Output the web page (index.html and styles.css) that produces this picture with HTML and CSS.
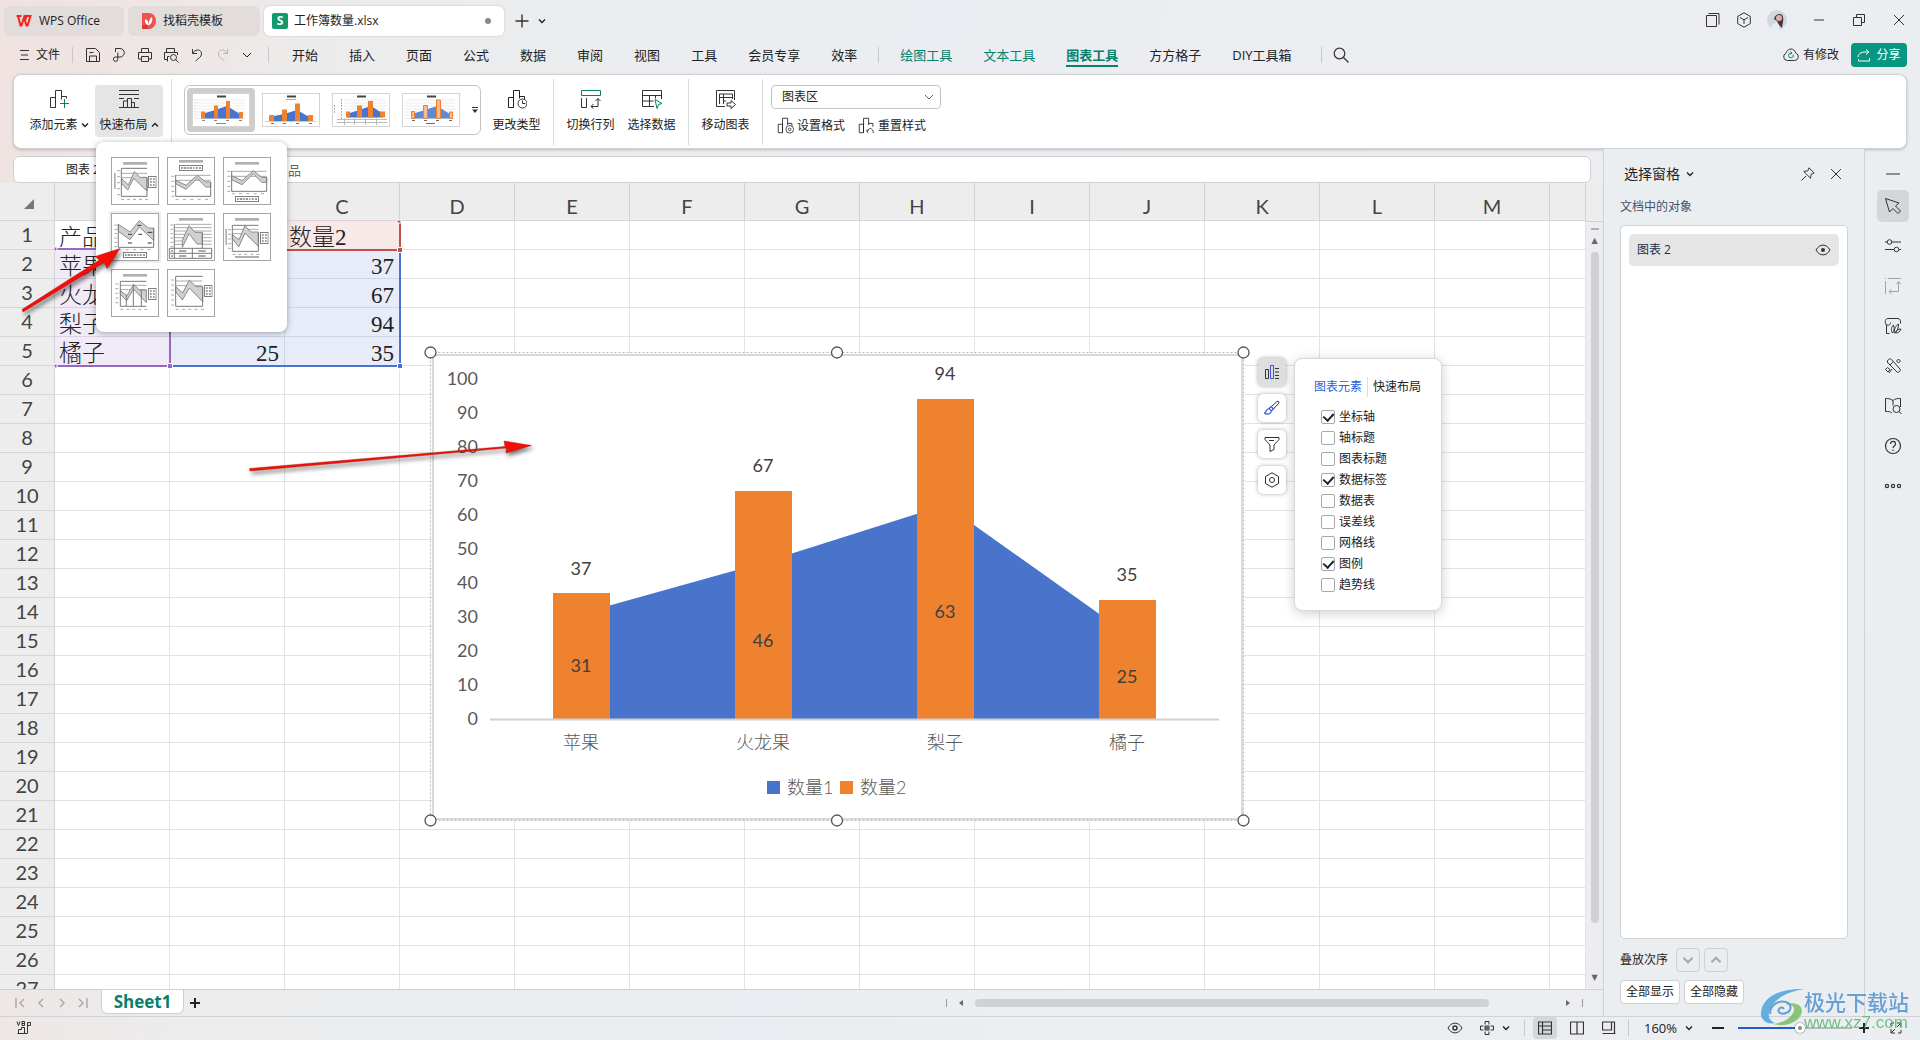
FILE: index.html
```html
<!DOCTYPE html>
<html lang="zh-CN">
<head>
<meta charset="utf-8">
<title>工作簿数量.xlsx - WPS Office</title>
<link rel="stylesheet" href="styles.css">
</head>
<body>
<svg class="defs" width="0" height="0" aria-hidden="true">
  <symbol id="down" viewBox="0 0 8 8"><path d="M1 2.500l3 3 3-3" fill="none" stroke="currentColor" stroke-width="1.400"/></symbol>
  <symbol id="up" viewBox="0 0 8 8"><path d="M1 5.500l3-3 3 3" fill="none" stroke="currentColor" stroke-width="1.400"/></symbol>
  <symbol id="down-thin" viewBox="0 0 12 12"><path d="M2 4l4 4 4-4" fill="none" stroke="currentColor"/></symbol>
  <symbol id="bars" viewBox="0 0 20 20"><path d="M1.500 18.500v-10h5v10zM6.500 18.500v-17h6v8M12.500 7.500h5v4" fill="none" stroke="currentColor"/></symbol>
  <symbol id="legend-box" viewBox="0 0 26 36"><rect x="1.500" y="1.500" width="23" height="33" fill="#fff" stroke="#7f7f7f" stroke-width="3"/><path d="M6 9h5M6 18h5M6 27h5M15 9h5M15 18h5M15 27h5" stroke="#777" stroke-width="4"/></symbol>
  <symbol id="legend-row" viewBox="0 0 72 18"><rect x="1.500" y="1.500" width="69" height="15" fill="#fff" stroke="#7f7f7f" stroke-width="3"/><path d="M6 9h5M14 9h8M24 9h5M32 9h7M42 9h4M50 9h6M60 9h6" stroke="#777" stroke-width="4"/></symbol>
</svg>

<header class="titlebar">
  <nav class="doc-tabs">
    <button class="doc-tab tab-home"><svg width="16" height="14" viewBox="0 0 16 14"><path d="M.5 2h5M2 2l2.500 9.500h1L8 3.500l2.500 8h1L14.500 2H8.500M10.500 2L9 7" fill="none" stroke="#f4251f" stroke-width="2"/></svg>WPS Office</button>
    <button class="doc-tab tab-tpl"><svg width="14" height="16" viewBox="0 0 14 16"><path d="M0 0h7a7 8 0 0 1 0 16H0z" fill="#ef5350"/><path d="M0 12h6v4H0z" fill="#d43c3c"/><path d="M6.500 12.500C3 11 2.500 8 3.500 6c2 1 3 3 3 6.500 0-4 1-6.500 3.500-8.500 1 4-.5 7-3.500 8.500z" fill="#fff"/></svg>找稻壳模板</button>
    <button class="doc-tab tab-doc"><span class="s-icon">S</span>工作簿数量.xlsx<span class="dot"></span></button>
    <button class="plain new-tab" aria-label="新建"><svg width="14" height="14" viewBox="0 0 14 14"><path d="M7 .5v13M.5 7h13" stroke="#333" stroke-width="1.400"/></svg></button>
    <button class="plain" aria-label="标签列表"><svg width="8" height="8"><use href="#down"/></svg></button>
  </nav>
  <div class="win-tools">
    <button class="plain" aria-label="窗口"><svg width="16" height="16" viewBox="0 0 16 16"><path d="M1.500 3.500h10v11h-10zM3.500 1.500h10.500v11" fill="none" stroke="#333"/></svg></button>
    <button class="plain" aria-label="应用"><svg width="16" height="16" viewBox="0 0 16 16"><path d="M8 .8l6.300 3.600v7.200L8 15.200l-6.300-3.600V4.400zM4 5.500l4 2.300 4-2.300M8 7.800v4.200" fill="none" stroke="#333"/></svg></button>
    <button class="plain" aria-label="账号"><svg width="20" height="20" viewBox="0 0 20 20"><circle cx="10" cy="10" r="10" fill="#cfd9df"/><path d="M7 9c1-5 8-7 9-2 .8 4-.5 6-1 11l-3-3-2-4z" fill="#4a3440"/><circle cx="12" cy="8" r="3" fill="#dcb0a5"/><path d="M4 16l5-4 3 3v5H6z" fill="#e7eef2"/></svg></button>
    <button class="plain wide" aria-label="最小化"><svg width="16" height="16" viewBox="0 0 16 16"><path d="M3 8h10" stroke="#333"/></svg></button>
    <button class="plain wide" aria-label="还原"><svg width="16" height="16" viewBox="0 0 16 16"><path d="M2.500 5.500h8v8h-8zM5.500 5V2.500h8v8H11" fill="none" stroke="#333"/></svg></button>
    <button class="plain wide" aria-label="关闭"><svg width="16" height="16" viewBox="0 0 16 16"><path d="M3 3l10 10M13 3L3 13" stroke="#333"/></svg></button>
  </div>
</header>

<div class="menubar">
  <button class="plain file"><svg width="10" height="12" viewBox="0 0 10 12"><path d="M0 1.500h9M1 6h7M0 10.500h9" stroke="#333"/></svg>文件</button>
  <i class="vsep"></i>
  <div class="quick">
    <button class="plain" aria-label="保存"><svg width="16" height="16" viewBox="0 0 16 16"><path d="M1.500 14.500v-13h9l4 4v9zM4.500 14v-5h7v5M4.500 5.500h4" fill="none" stroke="#333"/></svg></button>
    <button class="plain" aria-label="输出"><svg width="16" height="16" viewBox="0 0 16 16"><path d="M4.500 5V1.500H9a4 4 0 0 1 0 8.500H4.500a2.200 2.200 0 1 0 2.300 2.200V5.500" fill="none" stroke="#333"/></svg></button>
    <button class="plain" aria-label="打印"><svg width="16" height="16" viewBox="0 0 16 16"><path d="M4.500 5V1.500h7V5M4.500 12h-3V5.500h13V12h-3M4.500 9.500h7v5h-7z" fill="none" stroke="#333"/></svg></button>
    <button class="plain" aria-label="打印预览"><svg width="16" height="16" viewBox="0 0 16 16"><path d="M3.500 5V1.500h8V5M4 12.500H1.500v-7h13V8M4.500 14.500v-5h2" fill="none" stroke="#333"/><circle cx="10.500" cy="10.500" r="3" fill="none" stroke="#333"/><path d="M12.500 12.500l3 3" stroke="#333"/></svg></button>
    <button class="plain" aria-label="撤销"><svg width="16" height="16" viewBox="0 0 16 16"><path d="M3.500 2v4.500H8M4 6c3-5 9-3 8.500 1 0 3-3 4-6 7" fill="none" stroke="#333"/></svg></button>
    <button class="plain" aria-label="恢复"><svg width="16" height="16" viewBox="0 0 16 16"><path d="M12.500 2v4.500H8M12 6C9 1 3 3 3.500 7c0 3 3 4 6 7" fill="none" stroke="#b5b5b5"/></svg></button>
    <button class="plain" aria-label="更多"><svg width="12" height="12"><use href="#down-thin"/></svg></button>
  </div>
  <i class="vsep"></i>
  <nav class="menu-tabs">
    <a href="#">开始</a><a href="#">插入</a><a href="#">页面</a><a href="#">公式</a><a href="#">数据</a><a href="#">审阅</a><a href="#">视图</a><a href="#">工具</a><a href="#">会员专享</a><a href="#">效率</a>
    <i class="vsep"></i>
    <a class="ctx" href="#">绘图工具</a><a class="ctx" href="#">文本工具</a><a class="ctx active" href="#">图表工具</a><a href="#">方方格子</a><a href="#">DIY工具箱</a>
    <i class="vsep"></i>
    <button class="plain" aria-label="搜索"><svg width="16" height="16" viewBox="0 0 16 16"><circle cx="6.500" cy="6.500" r="5.300" fill="none" stroke="#333" stroke-width="1.200"/><path d="M10.500 10.500l5 5" stroke="#333" stroke-width="1.200"/></svg></button>
  </nav>
  <div class="menu-right">
    <button class="plain changed"><svg width="16" height="14" viewBox="0 0 16 14"><path d="M4.500 12.500A3.800 3.800 0 0 1 3 5.200C4 2.500 6 1 8 1s4 1.500 5 4.200a3.800 3.800 0 0 1-1.500 7.300z" fill="none" stroke="#333"/><path d="M10.200 6.500a2.400 2.400 0 1 1-2-1.500M7.500 3.500L9 5 7.500 6.500" fill="none" stroke="#0a8a6a"/></svg>有修改</button>
    <button class="share"><svg width="14" height="14" viewBox="0 0 14 14"><path d="M1 9c.5-4 4-5.500 10.500-5M9 1.500l3 2.500-3 2.500M1.500 11v2h11v-3" fill="none" stroke="#fff"/></svg>分享</button>
  </div>
</div>

<section class="ribbon">
  <button class="rb add"><svg class="ri" width="20" height="20" viewBox="0 0 20 20"><path d="M1.500 18.500v-10h5v10zM6.500 18.500v-17h6v9M12.500 7.500h5v2" fill="none" stroke="#333"/><path d="M15.500 10v9M11 14.500h9" stroke="#08805f"/></svg><span>添加元素<svg width="8" height="8"><use href="#down"/></svg></span></button>
  <button class="rb quick-layout"><svg class="ri" width="20" height="20" viewBox="0 0 20 20"><path d="M0 1.500h20M0 5.500h20M0 9.500h5M15 9.500h5M0 18.500h20M4.500 18v-6h4v6M8.500 18V9.500h4V18M12.500 13.500h3V18" fill="none" stroke="#333"/></svg><span>快速布局<svg width="8" height="8"><use href="#up"/></svg></span></button>
  <i class="rsep"></i>
  <div class="gallery">
    <button class="thumb selected" aria-label="样式 1"><svg width="56" height="32" viewBox="0 0 56 32"><path d="M2 6h50M2 9h50M2 12h50M2 15h50M2 18h50M2 21h50M2 24.500h50" stroke="#ececec"/><path d="M24 2.500h9" stroke="#444" stroke-width="2"/><path d="M2 5v20" stroke="#bcd" stroke-dasharray="1 2"/><path d="M9 20l13-4 12-4 13 8v4.500H9z" fill="#4874cb"/><path d="M8 17.500h4v7H8zM21 11.500h4v13h-4zM33 7h4v17.500h-4zM46 18h4v6.500h-4z" fill="#ee822f"/><path d="M9 26.500h3M21 26.500h3M33 26.500h3M46 26.500h3M23 29.500h10" stroke="#888"/></svg></button>
    <button class="thumb" aria-label="样式 2"><svg width="56" height="32" viewBox="0 0 56 32"><path d="M24 2.500h9" stroke="#444" stroke-width="2"/><path d="M23 5.500h10" stroke="#aaa"/><path d="M6 23l15-3 13-4 14 8v3H6z" fill="#4874cb"/><path d="M6 21h5v6H6zM19 15.500h5V27h-5zM32 9.500h5V27h-5zM45 21h5v6h-5z" fill="#ee822f"/><path d="M2 27.500h51" stroke="#ccc"/><path d="M8 29.500h3M20 29.500h3M33 29.500h3M46 29.500h3" stroke="#777"/></svg></button>
    <button class="thumb" aria-label="样式 3"><svg width="56" height="32" viewBox="0 0 56 32"><path d="M11 6h42M11 9h42M11 12h42M11 15h42M11 18h42M11 21h42" stroke="#ececec"/><path d="M24 2.500h9" stroke="#444" stroke-width="2"/><path d="M1.500 11v8M8.500 5v20" stroke="#aaa" stroke-dasharray="2 1"/><path d="M14 20l12-4 12-4 11 7v4.500H14z" fill="#4874cb"/><path d="M13 17.500h4v6h-4zM24 11.500h5v12h-5zM35 7h5v16.500h-5zM47 17.500h5v6h-5z" fill="#ee822f"/><path d="M4 25.500h50M4 28.500h50M11.500 24v7M21.500 24v7M32.500 24v7M43.500 24v7" stroke="#bbb"/></svg></button>
    <button class="thumb" aria-label="样式 4"><svg width="56" height="32" viewBox="0 0 56 32"><path d="M2 6h50M2 9h50M2 12h50M2 15h50M2 18h50M2 21h50M2 24.500h50" stroke="#ececec"/><path d="M24 2.500h9" stroke="#444" stroke-width="2"/><path d="M9 20l13-4 12-4 13 8v4.500H9z" fill="#6389d3"/><path d="M8.500 17.500h3v7h-3zM20.500 11.500h4v13h-4zM33.500 6h4v18.500h-4zM46.500 18h3v6.500h-3z" fill="#f6bb8f" stroke="#ee822f"/><path d="M9 26.500h3M21 26.500h3M33 26.500h3M46 26.500h3M23 29.500h9" stroke="#668"/></svg></button>
    <button class="plain more" aria-label="展开"><svg width="8" height="8" viewBox="0 0 8 8"><path d="M1 1.500h6" stroke="#333"/><path d="M1 3.500h6L4 7z" fill="#333"/></svg></button>
  </div>
  <button class="rb change"><svg class="ri" width="20" height="20" viewBox="0 0 20 20"><use href="#bars"/><circle cx="15.500" cy="14.500" r="4.500" fill="#fff" stroke="#333"/><path d="M15.500 11.500v3h3" fill="none" stroke="#333"/></svg><span>更改类型</span></button>
  <i class="rsep"></i>
  <button class="rb switch"><svg class="ri" width="20" height="20" viewBox="0 0 20 20"><path d="M.5 1.500h19v5H.5z" fill="none" stroke="#08805f"/><path d="M.5 9v9.500h5V9M17 9.500v8h-7M14.500 12L17 9.500l2.500 2.500M12.500 15L10 17.500l2.500 2" fill="none" stroke="#333"/></svg><span>切换行列</span></button>
  <button class="rb pick"><svg class="ri" width="20" height="20" viewBox="0 0 20 20"><path d="M12 17.500H.5v-16h19V10M.5 6.500h19M.5 12h11M7.500 6.500v11M13.500 6.500v3" fill="none" stroke="#333"/><path d="M13 10.500l7 4-3.500 1-1.500 4z" fill="#fff" stroke="#08805f"/></svg><span>选择数据</span></button>
  <i class="rsep"></i>
  <button class="rb move"><svg class="ri" width="20" height="20" viewBox="0 0 20 20"><path d="M9 17.500H.5v-16h18V11M3.500 15V5h13v5M3.500 8.500h13M7.500 5v10M7.500 12H10" fill="none" stroke="#333"/><path d="M11 14h4v-2.500l4.500 4-4.500 4V17h-4z" fill="#fff" stroke="#333"/></svg><span>移动图表</span></button>
  <i class="rsep"></i>
  <div class="area-box">
    <div class="combo"><select aria-label="图表区域"><option>图表区</option></select><svg width="12" height="12"><use href="#down-thin"/></svg></div>
    <div class="area-row">
      <button class="plain"><svg width="17" height="17" viewBox="0 0 20 20"><use href="#bars"/><circle cx="15" cy="14.500" r="4.500" fill="#fff" stroke="#333"/><circle cx="15" cy="14.500" r="1.500" fill="none" stroke="#333"/></svg>设置格式</button>
      <button class="plain"><svg width="17" height="17" viewBox="0 0 20 20"><use href="#bars"/><path d="M11 12h8v7h-8z" fill="#fff"/><path d="M12 19l-2-3 3-1M11 17c1-5 7-5 7 2" fill="none" stroke="#333"/></svg>重置样式</button>
    </div>
  </div>
</section>

<div class="main">
  <main class="book">
    <div class="formula"><input class="name-box" aria-label="名称框" value="图表 2"><input class="fx" aria-label="编辑栏" value="品"></div>
    <div class="sheet">
      <table class="cells">
        <thead><tr id="heads"><th class="corner"><svg width="10" height="10" viewBox="0 0 10 10"><path d="M10 0v10H0z" fill="#777"/></svg></th></tr></thead>
        <tbody id="rows"></tbody>
      </table>
      <div class="vscroll"><i class="split"></i><i class="tri">▲</i><i class="thumb-v"></i><i class="tri">▼</i></div>

      <svg class="ranges" width="350" height="156" viewBox="0 0 350 156" aria-hidden="true">
        <path d="M346 5v28H232" fill="none" stroke="#c0504d" stroke-width="2"/>
        <path d="M2 32h114v116M2 149h114" fill="none" stroke="#9668c0" stroke-width="2"/>
        <path d="M119 149h227V34" fill="none" stroke="#4a72d0" stroke-width="2"/>
        <path d="M343 3h4v3h-4zM343.500 30.500h5v5h-5z" fill="#c0504d" stroke="#fff"/>
        <path d="M0 30h3v4H0zM0 147h3v4H0zM113.500 146.500h5v5h-5z" fill="#9668c0" stroke="#fff"/>
        <path d="M343.500 146.500h5v5h-5z" fill="#4a72d0" stroke="#fff"/>
      </svg>

      <svg class="chart" width="830" height="484" viewBox="0 0 830 484" role="img" aria-label="数量图表">
        <rect x="9" y="10" width="809" height="464" fill="#fff" stroke="#d9d9d9" stroke-width="2"/>
        <rect x="6.500" y="7.500" width="813" height="468" fill="none" stroke="#bbb" stroke-dasharray="2 2"/>
        <path d="M157 268.600L339.500 217.600 521.500 159.800 703.500 289V374H157z" fill="#4874cb"/>
        <path d="M129 248h57v126h-57zM311 146h57v228h-57zM493 54h57v320h-57zM675 255h57v119h-57z" fill="#ee822f"/>
        <path d="M66 374.500h729" stroke="#d0d0d0" stroke-width="2"/>
        <g class="axis" text-anchor="end"><text x="54" y="40">100</text><text x="54" y="74">90</text><text x="54" y="108">80</text><text x="54" y="142">70</text><text x="54" y="176">60</text><text x="54" y="210">50</text><text x="54" y="244">40</text><text x="54" y="278">30</text><text x="54" y="312">20</text><text x="54" y="346">10</text><text x="54" y="380">0</text></g>
        <g class="lab" text-anchor="middle"><text x="157" y="230">37</text><text x="339" y="127">67</text><text x="521" y="35">94</text><text x="703" y="236">35</text><text x="157" y="327">31</text><text x="339" y="302">46</text><text x="521" y="273">63</text><text x="703" y="338">25</text></g>
        <g class="cat" text-anchor="middle"><text x="157" y="404">苹果</text><text x="339" y="404">火龙果</text><text x="521" y="404">梨子</text><text x="703" y="404">橘子</text></g>
        <path d="M343 436h13v13h-13z" fill="#4874cb"/><path d="M416 436h13v13h-13z" fill="#ee822f"/>
        <g class="cat"><text x="363" y="449">数量1</text><text x="436" y="449">数量2</text></g>
        <g fill="#fff" stroke="#555" stroke-width="1.300"><circle cx="6.500" cy="7.500" r="5.500"/><circle cx="413" cy="7.500" r="5.500"/><circle cx="819.500" cy="7.500" r="5.500"/><circle cx="6.500" cy="475.500" r="5.500"/><circle cx="413" cy="475.500" r="5.500"/><circle cx="819.500" cy="475.500" r="5.500"/></g>
      </svg>

      <div class="chart-tools">
        <div class="tool-col">
          <button class="tool on" aria-label="图表元素"><svg width="16" height="16" viewBox="0 0 16 16"><path d="M1.500 5.500h3v9h-3zM11 4.500h4M11 8h4M11 11.500h4M11 14.500h4" fill="none" stroke="#333"/><path d="M6.500 1.500h3v13h-3z" fill="none" stroke="#3457d5"/></svg></button>
          <button class="tool" aria-label="图表样式"><svg width="16" height="16" viewBox="0 0 16 16"><path d="M7.500 6.500L13 1.500c1.500-.8 2.500.5 1.700 1.700L9.500 9" fill="none" stroke="#333"/><path d="M7 6.500l2.500 2.500-2 2-2.500-2.500zM5 8.500c-3 .5-2 3-4.500 4.500C3 15 7 14 7.500 11" fill="none" stroke="#3457d5" stroke-width="1.200"/></svg></button>
          <button class="tool" aria-label="图表筛选"><svg width="16" height="16" viewBox="0 0 16 16"><path d="M1 1.500h14v2L10 9v4.500l-4 2V9L1 3.500zM5 4.500h5" fill="none" stroke="#333"/></svg></button>
          <button class="tool" aria-label="设置"><svg width="16" height="16" viewBox="0 0 16 16"><path d="M8 .8l6.500 3.700v7L8 15.200l-6.500-3.700v-7z" fill="none" stroke="#333"/><circle cx="8" cy="8" r="2.500" fill="none" stroke="#333"/></svg></button>
        </div>
        <div class="elements">
          <div class="el-tabs"><button class="plain cur">图表元素</button><button class="plain">快速布局</button></div>
          <label><input type="checkbox" checked>坐标轴</label>
          <label><input type="checkbox">轴标题</label>
          <label><input type="checkbox">图表标题</label>
          <label><input type="checkbox" checked>数据标签</label>
          <label><input type="checkbox">数据表</label>
          <label><input type="checkbox">误差线</label>
          <label><input type="checkbox">网格线</label>
          <label><input type="checkbox" checked>图例</label>
          <label><input type="checkbox">趋势线</label>
        </div>
      </div>
    </div>
    <div class="sheetbar">
      <div class="sheet-nav">
        <button class="plain" aria-label="第一张"><svg width="10" height="10" viewBox="0 0 10 10"><path d="M1 0v10M9 1L5 5l4 4" fill="none" stroke="#aaa" stroke-width="1.500"/></svg></button>
        <button class="plain" aria-label="上一张"><svg width="10" height="10" viewBox="0 0 10 10"><path d="M7 1L3 5l4 4" fill="none" stroke="#aaa" stroke-width="1.500"/></svg></button>
        <button class="plain" aria-label="下一张"><svg width="10" height="10" viewBox="0 0 10 10"><path d="M3 1l4 4-4 4" fill="none" stroke="#aaa" stroke-width="1.500"/></svg></button>
        <button class="plain" aria-label="最后一张"><svg width="10" height="10" viewBox="0 0 10 10"><path d="M9 0v10M1 1l4 4-4 4" fill="none" stroke="#aaa" stroke-width="1.500"/></svg></button>
      </div>
      <button class="sheet-tab">Sheet1</button>
      <button class="plain add-sheet" aria-label="新建工作表"><svg width="10" height="10" viewBox="0 0 10 10"><path d="M5 0v10M0 5h10" stroke="#222" stroke-width="2"/></svg></button>
      <div class="hscroll"><i class="grip"></i><svg width="6" height="8" viewBox="0 0 6 8"><path d="M5 1v6L1 4z" fill="#666"/></svg><div class="htrack"><i></i></div><svg width="6" height="8" viewBox="0 0 6 8"><path d="M1 1v6l4-3z" fill="#666"/></svg><i class="grip"></i></div>
    </div>
  </main>

  <aside class="pane">
    <div class="pane-head"><h2>选择窗格<svg width="8" height="8"><use href="#down"/></svg></h2>
      <button class="plain" aria-label="固定"><svg width="14" height="14" viewBox="0 0 14 14"><path d="M8 .8L13.200 6l-3 1.200-.7 4-6.700-6.700 4-.7zM5 9l-4.500 4.500" fill="none" stroke="#333"/></svg></button>
      <button class="plain" aria-label="关闭窗格"><svg width="12" height="12" viewBox="0 0 12 12"><path d="M1 1l10 10M11 1L1 11" stroke="#333"/></svg></button></div>
    <p class="pane-sub">文档中的对象</p>
    <div class="objects"><button class="object">图表 2<svg width="16" height="12" viewBox="0 0 16 12"><path d="M1 6c3.500-6.500 10.500-6.500 14 0-3.500 6.500-10.500 6.500-14 0z" fill="none" stroke="#333"/><circle cx="8" cy="6" r="2" fill="#333"/></svg></button></div>
    <div class="order"><span>叠放次序</span><button aria-label="下移"><svg width="12" height="12"><use href="#down"/></svg></button><button aria-label="上移"><svg width="12" height="12"><use href="#up"/></svg></button></div>
    <div class="showhide"><button>全部显示</button><button>全部隐藏</button></div>
  </aside>

  <aside class="rail">
    <button class="collapse" aria-label="折叠"></button>
    <button class="on" aria-label="选择"><svg width="18" height="18" viewBox="0 0 18 18"><path d="M1.500 1.500l13.500 4.500-3.500 3 5 5-2.500 2.500-5-5-3.500 3.500z" fill="none" stroke="#333"/></svg></button>
    <button aria-label="属性"><svg width="18" height="18" viewBox="0 0 18 18"><path d="M1 5h2M8 5h9M1 12.500h9M15 12.500h2" stroke="#333" stroke-width="1.200"/><circle cx="5.500" cy="5" r="2.300" fill="none" stroke="#333"/><circle cx="12.500" cy="12.500" r="2.300" fill="none" stroke="#333"/></svg></button>
    <button aria-label="转换"><svg width="18" height="18" viewBox="0 0 18 18"><path d="M1.500 4v13M4 1.500h13M14.500 5v9.500h-9M12.500 7l2-2.500L17 7M7.500 12L5 14.500 7.500 17M1 1.500h1" fill="none" stroke="#a3a3a3"/></svg></button>
    <button aria-label="素材"><svg width="18" height="18" viewBox="0 0 18 18"><path d="M5.500 16.500h-3V8C0 5 1.500 1.500 4 1.500h10c2 0 3 3 2.500 5M2.500 8c3 1 4-1 4-2.500M8.500 16c-2-3-1-6 1-8 1 3 1 6-1 8zM10.500 16c-1-4 2-8 4-9 0 4-1 7-4 9zM11.500 16c1-3 3-4 5.500-4-1 3-3 4-5.500 4z" fill="none" stroke="#333"/></svg></button>
    <button aria-label="工具"><svg width="18" height="18" viewBox="0 0 18 18"><path d="M4 3c2-2 3-1 4 0l8 9c1 2-1 4-3 3L5 7C3 6 3 4 4 3zM6 8l3-3M1.500 12.500l2-2 2.500 2-2 2.500zM12.500 4l2-2 2 2-2 2zM8 12l-3 4" fill="none" stroke="#333"/></svg></button>
    <button aria-label="查找"><svg width="18" height="18" viewBox="0 0 18 18"><path d="M9 3.500C6 1.500 4 1.500 1.500 1.500v13c3 0 5 0 6.500 1.500M9 3.500v5M9 3.500c2-2 5-2 7.500-2V10" fill="none" stroke="#333"/><circle cx="12.500" cy="12" r="3.500" fill="none" stroke="#333"/><path d="M15 14.500l2.500 2.500" stroke="#333"/></svg></button>
    <button aria-label="帮助"><svg width="18" height="18" viewBox="0 0 18 18"><circle cx="9" cy="9" r="7.500" fill="none" stroke="#333" stroke-width="1.200"/><path d="M6.500 7c0-3.500 5-3.500 5 0 0 2-2.500 2-2.500 4M9 12.500v1.500" fill="none" stroke="#333" stroke-width="1.200"/></svg></button>
    <button aria-label="更多"><svg width="18" height="18" viewBox="0 0 18 18"><g fill="none" stroke="#333" stroke-width="1.200"><circle cx="3" cy="9" r="1.600"/><circle cx="9" cy="9" r="1.600"/><circle cx="15" cy="9" r="1.600"/></g></svg></button>
  </aside>
</div>

<footer class="status">
  <svg class="vb" width="16" height="14" viewBox="0 0 16 14"><path d="M1 .5L2.500 4.500 4 .5M6 .5v4h2.500v-4zM6 2.500h2.500M11.500 12V1.500h3v3h-3M2.500 12.500v-4h3v-2h3v6M1.500 12.500h10" fill="none" stroke="#333"/></svg>
  <div class="status-right">
    <button class="plain s-eye" aria-label="护眼"><svg width="16" height="12" viewBox="0 0 16 12"><path d="M1 6c3.500-6.500 10.500-6.500 14 0-3.500 6.500-10.500 6.500-14 0z" fill="none" stroke="#333"/><circle cx="8" cy="6" r="2" fill="none" stroke="#333" stroke-width="1.500"/></svg></button>
    <button class="plain s-cross" aria-label="阅读模式"><svg width="14" height="14" viewBox="0 0 14 14"><path d="M5 3.500v-3h4v3M5 10.500v3h4v-3M3.500 5h-3v4h3M10.500 5h3v4h-3M5 5h4v4H5zM7 5v4M5 7h4" fill="none" stroke="#333"/></svg><svg width="8" height="8"><use href="#down"/></svg></button>
    <i class="vsep"></i>
    <button class="view on" aria-label="普通视图"><svg width="14" height="14" viewBox="0 0 14 14"><path d="M.5 1h13v12H.5zM.5 5h13M4.500 1v12M4.500 9h9" fill="none" stroke="#333" stroke-width="1.200"/></svg></button>
    <button class="view" aria-label="分页预览"><svg width="14" height="14" viewBox="0 0 14 14"><path d="M.5 1h13v12H.5zM7 1v12" fill="none" stroke="#333" stroke-width="1.200"/></svg></button>
    <button class="view" aria-label="页面布局"><svg width="14" height="14" viewBox="0 0 14 14"><path d="M.5 1h9v8h-9zM12.500 1v12M.5 12.500h13M10 1h3" fill="none" stroke="#333" stroke-width="1.200"/></svg></button>
    <i class="vsep"></i>
    <button class="plain zoomv">160%<svg width="8" height="8"><use href="#down"/></svg></button>
    <button class="plain" aria-label="缩小"><svg width="12" height="12" viewBox="0 0 12 12"><path d="M0 6h12" stroke="#222" stroke-width="2"/></svg></button>
    <input class="zoom" type="range" min="0" max="100" value="55" aria-label="缩放">
    <button class="plain" aria-label="放大"><svg width="10" height="10" viewBox="0 0 10 10"><path d="M5 0v10M0 5h10" stroke="#222" stroke-width="2"/></svg></button>
    <button class="plain full" aria-label="全屏"><svg width="12" height="12" viewBox="0 0 12 12"><path d="M7 1h4v4M11 1L7 5M5 11H1V7M1 11l4-4M1 4V1h3M11 8v3H8" fill="none" stroke="#333"/></svg></button>
  </div>
</footer>

<div class="layouts">
  <button aria-label="布局 1"><svg viewBox="0 0 144 144"><path d="M36 15h72v8H36zM9 48h5v48H9z" fill="#b0b0b0"/><path d="M18 41h9M18 59h9M18 77h9M18 95h9M18 113h9M30 127h9M48 127h9M66 127h9M84 127h9M102 127h9M32 49h76M32 62h76" stroke="#aaa" stroke-width="3"/><path d="M32 65l20 19 18-40 17 17h21v41L68 64 50 99 32 80z" fill="#d0d0d0" stroke="#8a8a8a" stroke-width="3"/><path d="M108 34H31v84h77V61" fill="none" stroke="#7a7a7a" stroke-width="3"/><use href="#legend-box" x="111" y="57" width="26" height="36"/></svg></button>
  <button aria-label="布局 2"><svg viewBox="0 0 144 144"><path d="M36 9h72v8H36z" fill="#b0b0b0"/><path d="M13 58h9M13 73h9M13 88h9M13 103h9M13 118h9M26 127h9M48 127h9M70 127h9M92 127h9M114 127h9M26 55h105M26 70h105" stroke="#aaa" stroke-width="3"/><path d="M26 70l31 15 34-30 25 20h15v15h-15L91 64 57 97 26 80z" fill="#d0d0d0" stroke="#8a8a8a" stroke-width="3"/><path d="M26 54v64h105V76" fill="none" stroke="#7a7a7a" stroke-width="3"/><use href="#legend-row" x="36" y="24" width="72" height="18"/></svg></button>
  <button aria-label="布局 3"><svg viewBox="0 0 144 144"><path d="M36 15h72v8H36z" fill="#b0b0b0"/><path d="M13 43h9M13 58h9M13 73h9M13 88h9M13 103h9M26 110h9M48 110h9M70 110h9M92 110h9M114 110h9M26 43h105M26 58h105" stroke="#aaa" stroke-width="3"/><path d="M26 56l31 15 34-30 25 20h15v15h-15L91 50 57 83 26 68z" fill="#d0d0d0" stroke="#8a8a8a" stroke-width="3"/><path d="M26 42v61h105V62" fill="none" stroke="#7a7a7a" stroke-width="3"/><use href="#legend-row" x="36" y="117" width="72" height="18"/></svg></button>
  <button class="hover" aria-label="布局 4"><svg viewBox="0 0 144 144"><path d="M10 36h9M10 49h9M10 62h9M10 75h9M10 88h9M10 101h9M22 110h9M44 110h9M66 110h9M88 110h9M110 110h9" stroke="#aaa" stroke-width="3"/><path d="M22 34l35 23 28-34 27 22h16v37L85 42 57 80 22 55z" fill="#d0d0d0" stroke="#8a8a8a" stroke-width="3"/><path d="M22 34v69h106V45" fill="none" stroke="#7a7a7a" stroke-width="3"/><path d="M51 64h12M79 37h12M110 58h14M51 90h12M82 64h11M110 90h12" stroke="#333" stroke-width="3"/><use href="#legend-row" x="36" y="117" width="72" height="18"/></svg></button>
  <button aria-label="布局 5"><svg viewBox="0 0 144 144"><path d="M36 15h72v8H36z" fill="#b0b0b0"/><path d="M10 36h9M10 49h9M10 62h9M10 75h9M10 88h9M10 101h9M22 34h112M22 44h112M22 54h112M22 64h112M22 74h112M22 84h112M22 94h112" stroke="#aaa" stroke-width="3"/><path d="M46 82l20-44 18 20h22v46H46z" fill="#fff"/><path d="M46 82l20-44 18 20h22v35H90L66 62 46 103z" fill="#d0d0d0" stroke="#8a8a8a" stroke-width="3"/><path d="M22 34v102M7 106h127v30H7zM7 121h127M76 106v30M106 60v46" fill="none" stroke="#7a7a7a" stroke-width="3"/><path d="M36 114h22M94 114h22M36 129h22M94 129h22M12 114h6M12 129h6" stroke="#555" stroke-width="3"/></svg></button>
  <button aria-label="布局 6"><svg viewBox="0 0 144 144"><path d="M36 15h72v8H36zM7 48h5v48H7zM36 129h72v6H36z" fill="#b0b0b0"/><path d="M15 50h9M15 64h9M15 78h9M15 92h9M15 106h9M28 124h9M46 124h9M64 124h9M82 124h9M100 124h9M28 49h78M28 62h78" stroke="#aaa" stroke-width="3"/><path d="M28 65l20 15 18-42 17 19h23v43L66 60 47 102 28 76z" fill="#d0d0d0" stroke="#8a8a8a" stroke-width="3"/><path d="M106 37H28v78h78V58" fill="none" stroke="#7a7a7a" stroke-width="3"/><use href="#legend-box" x="111" y="57" width="26" height="36"/></svg></button>
  <button aria-label="布局 7"><svg viewBox="0 0 144 144"><path d="M36 15h72v8H36z" fill="#b0b0b0"/><path d="M13 45h9M13 59h9M13 73h9M13 87h9M13 101h9M28 121h9M46 121h9M64 121h9M82 121h9M100 121h9M28 49h78M28 62h78" stroke="#aaa" stroke-width="3"/><path d="M28 65l20 15 20-34 17 17h21v38L68 60 47 95 28 76z" fill="#d0d0d0" stroke="#8a8a8a" stroke-width="3"/><path d="M106 37H28v75h78M46 78v34M67 46v66M91 62v50" fill="none" stroke="#7a7a7a" stroke-width="3"/><use href="#legend-box" x="111" y="57" width="26" height="36"/></svg></button>
  <button aria-label="布局 8"><svg viewBox="0 0 144 144"><path d="M12 33h9M12 48h9M12 63h9M12 78h9M12 93h9M12 108h9M26 121h9M45 121h9M64 121h9M83 121h9M102 121h9M26 36h80M26 50h80" stroke="#aaa" stroke-width="3"/><path d="M26 53l21 19 20-39 20 20h20v45L67 57 46 93 26 68z" fill="#d0d0d0" stroke="#8a8a8a" stroke-width="3"/><path d="M107 22H26v90h81V53" fill="none" stroke="#7a7a7a" stroke-width="3"/><use href="#legend-box" x="111" y="48" width="26" height="36"/></svg></button>
</div>

<svg class="arrows" width="560" height="490" viewBox="0 0 560 490" aria-hidden="true">
  <g fill="#f80d06" stroke="#8d1a10" stroke-width=".4">
    <path d="M22 309.500l77.500-49.500L95 256.500l25-8-13 20-2.500-6L23 312z"/>
    <path d="M249.500 468.500l255.500-22-1-5.500 27.500 4.500-25.500 7.500.5-5L250 471z"/>
  </g>
</svg>

<div class="watermark">
  <svg width="44" height="42" viewBox="0 0 44 42"><path d="M44 1C22 0 3 8 1 24c-1 8 6 13 14 11C5 31 8 20 17 12 25 5 34 3 44 1z" fill="#4fa3dc"/><path d="M13 36c14 4 28-3 29-13 0-7-9-10-17-6 8-1 11 3 8 8-4 7-12 10-20 11z" fill="#7cbf66"/><path d="M10 26c0-9 8-14 16-12 6 2 6 9 0 11-5 2-9-1-7-4 1-2 4-2 5 0" fill="none" stroke="#4f93cc" stroke-width="2"/></svg>
  <div><b>极光下载站</b><span>www.xz7.com</span></div>
</div>
<script src="sheet.js"></script>
</body>
</html>
```
FILE: styles.css
```css
* { box-sizing: border-box; }
html, body { margin: 0; height: 100%; overflow: hidden; }
body {
  position: relative; display: flex; flex-direction: column;
  background: linear-gradient(100deg, #f0e2e0 0, #ececec 360px, #ebedf2 900px, #ebeef1 100%);
  font: 12px/16px "Open Sans", "Noto Sans CJK SC", sans-serif; color: #222;
}
svg { display: block; flex: none; }
.defs { position: absolute; }
button, input, select { font: inherit; color: inherit; }
button { border: 0; padding: 0; background: none; display: flex; align-items: center; }
.plain { gap: 8px; }
a { color: inherit; text-decoration: none; }
.vsep { width: 1px; height: 16px; background: #c6c8cb; flex: none; }

.titlebar { display: flex; justify-content: space-between; padding: 6px 13px 0 4px; height: 36px; flex: none; }
.doc-tabs { display: flex; align-items: center; gap: 4px; }
.doc-tab { height: 30px; border-radius: 6px; background: #e2dcdb; gap: 7px; padding-left: 12px; }
.tab-home { width: 120px; }
.tab-tpl { width: 132px; padding-left: 14px; }
.tab-doc { width: 240px; padding: 0 13px 0 8px; gap: 6px; background: #fff; box-shadow: 0 0 2px #bbb; }
.s-icon { width: 16px; height: 16px; border-radius: 2px; background: #13996b; color: #fff; font-weight: 700; line-height: 16px; text-align: center; }
.dot { width: 6px; height: 6px; border-radius: 50%; background: #8a8a8a; margin-left: auto; }
.new-tab { margin-left: 7px; margin-right: 5px; }
.win-tools { display: flex; align-items: center; gap: 15px; height: 28px; }
.win-tools .wide { margin-left: 9px; }

.menubar { display: flex; align-items: center; height: 38px; padding: 0 13px 0 20px; flex: none; }
.file { gap: 6px; margin-right: 12px; }
.quick { display: flex; gap: 10px; padding: 0 15px 0 12px; }
.menu-tabs { display: flex; align-items: center; gap: 31px; margin-left: 23px; font-size: 13px; }
.menu-tabs .vsep { margin: 0 -10px; }
.menu-tabs .vsep:nth-last-child(2) { margin: 0 -20px 0 -2px; }
.menu-tabs a { height: 24px; line-height: 24px; border-bottom: 2px solid transparent; white-space: nowrap; }
.menu-tabs .ctx { color: #08806a; }
.menu-tabs .active { font-weight: 700; border-color: #08806a; }
.menu-right { display: flex; align-items: center; gap: 12px; margin-left: auto; }
.changed { gap: 4px; }
.share { width: 56px; height: 24px; border-radius: 4px; background: #079682; color: #fff; justify-content: center; gap: 5px; }

.ribbon { display: flex; height: 75px; margin: 0 13px; padding: 10px 0 0 13px; background: #fff; border: 1px solid #d0d1d3; border-radius: 8px; box-shadow: 0 1px 3px #0003; flex: none; }
.rb { flex-direction: column; height: 52px; padding-top: 4px; gap: 8px; border-radius: 4px; width: 61px; white-space: nowrap; }
.rb span { display: flex; align-items: center; gap: 3px; }
.add { width: 64px; margin-right: 4px; }
.quick-layout { width: 68px; background: #e5e5e5; }
.rsep { width: 1px; height: 66px; margin-top: -6px; background: #dadada; }
.quick-layout + .rsep { margin-left: 8px; }
.gallery { display: flex; align-items: center; height: 50px; width: 297px; margin-left: 12px; padding-left: 2px; gap: 2px; border: 1px solid #c4c4c4; border-radius: 6px; }
.thumb { width: 68px; height: 44px; border-radius: 4px; justify-content: center; }
.thumb svg { outline: 1px solid #d4d4d4; background: #fff; }
.thumb.selected { background: #cdcdcd; }
.more { margin-left: 4px; }
.change { margin: 0 6px 0 5px; }
.switch { margin-left: 6px; }
.pick { margin-right: 6px; }
.move { margin: 0 6px; }
.area-box { margin-left: 8px; }
.combo { position: relative; width: 170px; }
.combo select { appearance: none; width: 100%; height: 24px; padding: 0 10px; border: 1px solid #c4c4c4; border-radius: 4px; background: #fff; }
.combo svg { position: absolute; right: 6px; top: 6px; color: #666; }
.area-row { display: flex; gap: 13px; margin-top: 8px; padding-left: 6px; }
.area-row .plain { gap: 3px; }

.main { display: flex; flex: 1; min-height: 0; }
.book { flex: 1; min-width: 0; display: flex; flex-direction: column; }
.formula { display: flex; height: 27px; margin: 7px 12px 0 13px; border: 1px solid #d0d0d0; border-radius: 6px; background: #fff; flex: none; }
.formula input { border: 0; outline: 0; background: none; padding: 0; height: 24px; }
.name-box { width: 274px; padding-left: 52px !important; }
.fx { flex: 1; color: #666; font-size: 13px; }

.sheet { position: relative; flex: 1; display: flex; min-height: 0; overflow: hidden; background: #ededed; border-bottom: 1px solid #d0d0d0; }
.cells { flex: 1; min-width: 0; table-layout: fixed; border-spacing: 0; align-self: flex-start; font: 23px/23px "Liberation Serif", "Noto Sans CJK SC", serif; font-weight: 300; }
.cells th { width: 115px; background: #ededed; font: 400 20px/24px Lato, sans-serif; color: #444; padding: 0 0 2px; border-right: 1px solid #d2d2d2; border-bottom: 1px solid #d6d6d6; }
.cells thead th { height: 38px; padding-top: 10px; }
.cells .corner, .cells tbody th { width: 55px; }
.cells .corner { padding: 4px 0 0 24px; }
.cells .rest { width: auto; }
.cells td { height: 29px; padding: 5px 4px 0; border-right: 1px solid #e3e3e3; border-bottom: 1px solid #e3e3e3; background: #fff; overflow: hidden; white-space: nowrap; }
.cells td.num { text-align: right; padding-right: 5px; background: #e7ecf8; border-color: #cdd5e6; }
.cells td.name { background: #f1eaf7; border-color: #dcd2e4; }
.cells td.head { background: #f8e8e8; }
.vscroll { width: 17px; margin: 38px 0 0; display: flex; flex-direction: column; align-items: center; border-top: 1px solid #d0d0d0; background: #ebedf1; }
.split { width: 8px; height: 2px; background: #b0b0b0; margin: 6px 0; }
.tri { font: 8px/10px "DejaVu Sans", sans-serif; color: #666; }
.thumb-v { flex: 1; width: 8px; margin: 6px 0 50px; border-radius: 4px; background: #d0d1d4; }
.vscroll .tri:last-child { margin-bottom: 6px; }
.ranges { position: absolute; left: 54px; top: 34px; }
.chart { position: absolute; left: 424px; top: 162px; }
.axis { font: 18px Lato, sans-serif; fill: #595959; }
.lab { font: 18px Lato, sans-serif; fill: #404040; }
.cat { font: 300 18px Lato, "Noto Sans CJK SC", sans-serif; fill: #595959; }

.chart-tools { position: absolute; left: 1258px; top: 175px; display: flex; align-items: flex-start; gap: 8px; }
.tool-col { display: flex; flex-direction: column; gap: 8px; }
.tool { width: 28px; height: 28px; justify-content: center; border-radius: 5px; background: #fff; box-shadow: 0 0 4px #0005; }
.tool.on { background: #dedede; }
.elements { width: 148px; height: 253px; padding: 18px 0 0 19px; background: #fff; border: 1px solid #d8d8d8; border-radius: 8px; box-shadow: 0 2px 12px #0003; }
.el-tabs { display: flex; margin-bottom: 9px; }
.el-tabs button { height: 20px; }
.el-tabs .cur { color: #1f5fd8; padding-right: 5px; margin-right: 5px; border-right: 1px solid #ddd; }
.elements label { display: flex; align-items: center; gap: 4px; height: 21px; margin-left: 7px; }
.elements input { appearance: none; width: 14px; height: 14px; margin: 0; border: 1px solid #a5a7ad; border-radius: 2px; background: #fff; display: flex; justify-content: center; align-items: center; }
.elements input:checked::before { content: ""; width: 5px; height: 8px; margin-bottom: 2px; border: solid #223; border-width: 0 2px 2px 0; transform: rotate(42deg); }

.sheetbar { display: flex; height: 26px; padding: 0 0 1px 15px; flex: none; }
.sheet-nav { display: flex; gap: 11px; align-items: center; width: 86px; }
.sheet-tab { width: 83px; height: 24px; justify-content: center; background: #fff; border: 1px solid #d0d0d0; border-top: 0; border-radius: 0 0 6px 6px; color: #08806a; font: 700 17px/24px "Open Sans", sans-serif; }
.add-sheet { margin-left: 6px; }
.hscroll { display: flex; align-items: center; gap: 11px; width: 637px; margin-left: auto; margin-right: 20px; }
.grip { width: 1px; height: 8px; background: #999; }
.htrack { flex: 1; display: flex; }
.htrack i { width: 514px; height: 8px; border-radius: 4px; background: #d0d1d4; }

.pane { width: 262px; border: solid #d0d3d6; border-width: 0 1px; padding: 15px 16px 12px; display: flex; flex-direction: column; background: #ebeef1; }
.pane-head { display: flex; align-items: center; gap: 15px; height: 20px; padding: 0 6px 0 4px; }
.pane-head h2 { display: flex; align-items: center; gap: 6px; margin: 0 auto 0 0; font: 400 14px/20px "Open Sans", "Noto Sans CJK SC", sans-serif; }
.pane-sub { margin: 15px 0 10px; color: #44506a; }
.objects { flex: 1; padding: 8px; border: 1px solid #cfd3d8; border-radius: 5px; background: #fff; }
.object { width: 100%; height: 32px; padding: 0 8px; border-radius: 5px; background: #e5e5e5; justify-content: space-between; color: #26304a; }
.order { display: flex; align-items: center; gap: 4px; margin: 9px 0 8px; }
.order span { margin-right: 4px; }
.order button { width: 24px; height: 24px; justify-content: center; border: 1px solid #cfd1d4; border-radius: 4px; color: #aaa; }
.showhide { display: flex; gap: 4px; }
.showhide button { width: 60px; height: 24px; justify-content: center; background: #fff; border: 1px solid #cfd1d4; border-radius: 4px; }

.rail { width: 55px; padding: 17px 0 0; display: flex; flex-direction: column; align-items: center; gap: 8px; }
.rail button { width: 32px; height: 32px; border-radius: 5px; justify-content: center; }
.rail .on { background: #d4d7da; }
.rail .collapse { width: 14px; height: 2px; margin: 7px 0; background: #8f8f8f; border-radius: 0; }

.status { display: flex; align-items: center; height: 24px; padding: 0 18px 1px 16px; border-top: 1px solid #d0d3d6; flex: none; }
.status-right { display: flex; align-items: center; margin-left: auto; }
.s-cross { margin: 0 14px 0 17px; }
.view { width: 24px; height: 22px; justify-content: center; border-radius: 4px; margin-left: 8px; }
.view.on { background: #d4d7da; }
.view + .vsep { margin: 0 15px 0 7px; }
.zoomv { font-size: 13px; margin-right: 19px; }
.zoom { appearance: none; width: 114px; height: 12px; margin: 0 7px 0 14px; background: linear-gradient(90deg, #1f5fc8 54%, #b5b9c0 54%) center / 100% 2px no-repeat; }
.zoom::-webkit-slider-thumb { appearance: none; width: 10px; height: 10px; border-radius: 50%; border: 3px solid #fff; background: #888; box-shadow: 0 0 2px #555; }
.full { margin-left: 21px; }

.layouts { position: absolute; left: 96px; top: 142px; width: 191px; height: 190px; padding: 15px; display: grid; grid-template-columns: repeat(3, 48px); grid-auto-rows: 48px; gap: 8px; background: #fff; border-radius: 8px; box-shadow: 0 1px 6px #0005; }
.layouts button { border: 1px solid #a5a5a5; background: #fff; }
.layouts svg { width: 48px; height: 48px; margin: -1px; }
.layouts .hover { outline: 2px solid #eee; }
.arrows { position: absolute; left: 0; top: 0; pointer-events: none; filter: drop-shadow(2px 3px 2px #0008); }
.watermark { position: absolute; right: 11px; bottom: 8px; display: flex; pointer-events: none; opacity: .85; }
.watermark div { display: flex; flex-direction: column; }
.watermark b { font: 500 21px/26px "Noto Sans CJK SC", sans-serif; color: #4f93d2; }
.watermark span { font: 17px/18px "Liberation Sans", sans-serif; color: #5cb873; }
```
FILE: sheet.js
```js
const columns = "ABCDEFGHIJKLM".split("");
const data = [
  ["产品", "数量1", "数量2"],
  ["苹果", 31, 37],
  ["火龙果", 46, 67],
  ["梨子", 63, 94],
  ["橘子", 25, 35]
];
const heads = document.getElementById("heads");
columns.concat("").forEach(function (name) {
  const th = document.createElement("th");
  th.textContent = name;
  if (!name) th.className = "rest";
  heads.append(th);
});
const body = document.getElementById("rows");
for (let r = 0; r < 27; r++) {
  const tr = body.insertRow();
  const th = document.createElement("th");
  th.textContent = r + 1;
  tr.append(th);
  for (let c = 0; c <= columns.length; c++) {
    const td = tr.insertCell();
    if (!data[r] || c > 2) continue;
    td.textContent = data[r][c];
    if (r === 0) td.className = c ? "head" : "";
    else td.className = c ? "num" : "name";
  }
}
```
